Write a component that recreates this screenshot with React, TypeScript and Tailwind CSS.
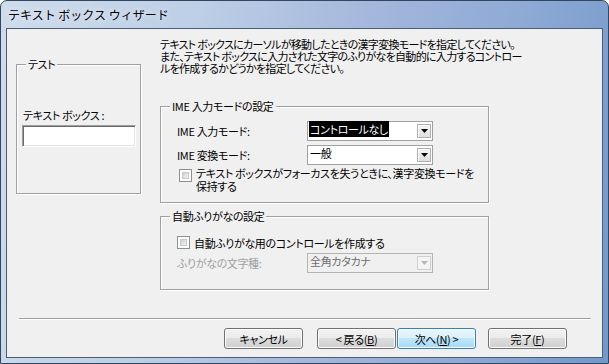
import React from "react";

const Tri = ({ color = "#000" }: { color?: string }) => (
  <svg width="7" height="4" viewBox="0 0 7 4">
    <path d="M0 0H7L3.5 4Z" fill={color} />
  </svg>
);

function Combo({ children, disabled = false }: { children: React.ReactNode; disabled?: boolean }) {
  return (
    <div
      className={`w-[126px] h-[20px] border flex items-start ${
        disabled ? "border-[#b4b4b4] bg-[#f0f0f0]" : "border-[#a0a0a0] bg-white"
      }`}
    >
      <div className="mt-[1px] ml-[1px] leading-[12px] whitespace-nowrap">{children}</div>
      <div
        className={`ml-auto self-end mb-[2px] mr-[1px] w-[14px] h-[14px] border flex items-center justify-center ${
          disabled
            ? "border-[#d0d0d0] bg-[#f4f4f4]"
            : "border-[#b0b0b0] bg-[linear-gradient(#f6f6f6,#dedede)] shadow-[inset_1px_1px_0_#ffffff]"
        }`}
      >
        <Tri color={disabled ? "#b8b8b8" : "#000"} />
      </div>
    </div>
  );
}

function Check() {
  return (
    <div className="w-[13px] h-[13px] border border-[#8e8f8f] bg-white p-[2px] shrink-0">
      <div className="w-full h-full bg-[linear-gradient(135deg,#cbcfd5,#f4f4f4)] border border-[#c6c9cc]" />
    </div>
  );
}

function Group({
  label,
  className,
  children,
}: {
  label: string;
  className: string;
  children?: React.ReactNode;
}) {
  return (
    <div
      className={`border border-[#a0a0a0] shadow-[inset_1px_1px_0_#ffffff,1px_1px_0_#ffffff] flex flex-col shrink-0 ${className}`}
    >
      <div className="-mt-[7px] ml-[9px] px-[2px] w-fit bg-[#f0f0f0] leading-[12px] whitespace-nowrap">{label}</div>
      {children}
    </div>
  );
}

function Btn({ children, def = false }: { children: React.ReactNode; def?: boolean }) {
  return (
    <div
      className={`w-[79px] h-[21px] rounded-[3px] border flex items-center justify-center leading-[12px] ${
        def
          ? "border-[#3c7fb1] bg-[linear-gradient(#eaf6fd_0%,#d9f0fc_50%,#bee6fd_50%,#a7d9f5_100%)] shadow-[inset_0_0_0_1px_#f4fbfe]"
          : "border-[#707070] bg-[linear-gradient(#f2f2f2_0%,#ebebeb_50%,#dddddd_50%,#cfcfcf_100%)] shadow-[inset_0_0_0_1px_#fcfcfc]"
      }`}
    >
      {children}
    </div>
  );
}

export default function App() {
  return (
    <div className="w-[609px] h-[364px] bg-white font-['Noto_Sans_CJK_JP',sans-serif] text-black">
      <div className="w-full h-full rounded-t-[7px] border border-[#34465e] bg-[linear-gradient(100deg,#cfdcec_0%,#bccfe6_30%,#a5b7dc_55%,#8eaad5_78%,#7398cb_100%)] flex flex-col">
        <div className="h-[27px] shrink-0 flex items-center pl-[7px] text-[12px] leading-[14px] [text-shadow:0_0_6px_rgba(255,255,255,0.9)]">
          テキスト ボックス ウィザード
        </div>
        <div className="flex-1 mx-[5px] mb-[5px] border border-[#4a5d75] bg-[#f0f0f0] flex flex-col text-[11px] tracking-[-0.35px] [font-feature-settings:'palt']">
          <div className="h-[289px] shrink-0 flex">
            <div className="ml-[9px] mt-[35px]">
              <Group label="テスト" className="w-[125px] h-[130px]">
                <div className="ml-[6px] mt-[39px] leading-[12px]">テキスト ボックス :</div>
                <div className="ml-[5px] mt-[4px] w-[114px] h-[22px] bg-white border border-t-[#a0a0a0] border-l-[#a0a0a0] border-r-white border-b-white shadow-[inset_1px_1px_0_#696969,inset_-1px_-1px_0_#e3e3e3]" />
              </Group>
            </div>
            <div className="ml-[19px] w-[329px] flex flex-col">
              <div className="mt-[9px] leading-[12px] whitespace-nowrap tracking-[-0.7px]">
                テキスト ボックスにカーソルが移動したときの漢字変換モードを指定してください。
                <br />
                また、テキスト ボックスに入力された文字のふりがなを自動的に入力するコントロー
                <br />
                ルを作成するかどうかを指定してください。
              </div>
              <Group label="IME 入力モードの設定" className="mt-[32px] w-[329px] h-[97px]">
                <div className="mt-[9px] flex items-center">
                  <div className="w-[146px] pl-[16px]">IME 入力モード:</div>
                  <Combo>
                    <span className="bg-black text-white px-[1px]">コントロールなし</span>
                  </Combo>
                </div>
                <div className="mt-[4px] flex items-center">
                  <div className="w-[146px] pl-[16px]">IME 変換モード:</div>
                  <Combo>
                    <span className="px-[1px]">一般</span>
                  </Combo>
                </div>
                <div className="mt-[2px] flex items-start pl-[18px]">
                  <div className="mt-[2px]">
                    <Check />
                  </div>
                  <div className="ml-[4px] leading-[13px] whitespace-nowrap">
                    テキスト ボックスがフォーカスを失うときに、漢字変換モードを
                    <br />
                    保持する
                  </div>
                </div>
              </Group>
              <Group label="自動ふりがなの設定" className="mt-[13px] w-[329px] h-[74px]">
                <div className="mt-[14px] flex items-center pl-[16px]">
                  <Check />
                  <div className="ml-[4px] leading-[12px] whitespace-nowrap">自動ふりがな用のコントロールを作成する</div>
                </div>
                <div className="mt-[4px] flex items-center">
                  <div className="w-[146px] pl-[16px] text-[#a0a0a0]">ふりがなの文字種:</div>
                  <Combo disabled>
                    <span className="px-[1px] text-[#6d6d6d]">全角カタカナ</span>
                  </Combo>
                </div>
              </Group>
            </div>
          </div>
          <div className="ml-[12px] w-[572px] h-[2px] border-t border-t-[#a0a0a0] border-b border-b-white" />
          <div className="mt-[8px] flex ml-[217px]">
            <Btn>キャンセル</Btn>
            <div className="ml-[14px]">
              <Btn>
                &lt; 戻る(<span className="underline">B</span>)
              </Btn>
            </div>
            <div className="ml-[1px]">
              <Btn def>
                次へ(<span className="underline">N</span>) &gt;
              </Btn>
            </div>
            <div className="ml-[12px]">
              <Btn>
                完了(<span className="underline">F</span>)
              </Btn>
            </div>
          </div>
        </div>
      </div>
    </div>
  );
}
